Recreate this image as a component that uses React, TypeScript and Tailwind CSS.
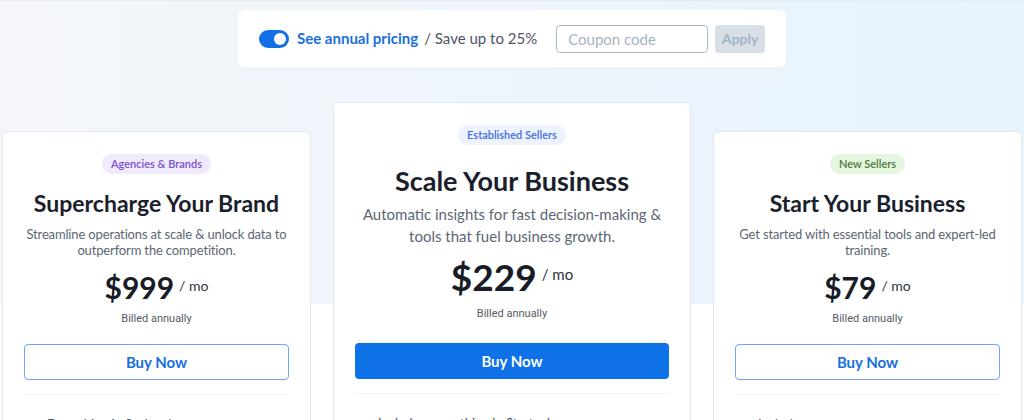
import React from "react";

type Plan = {
  badge: string;
  badgeCls: string;
  title: string;
  desc: string;
  price: string;
  featured?: boolean;
  feature: string;
};

const plans: Plan[] = [
  {
    badge: "Agencies & Brands",
    badgeCls: "bg-[#f0eafd] text-[#7b4fd0]",
    title: "Supercharge Your Brand",
    desc: "Streamline operations at scale & unlock data to outperform the competition.",
    price: "$999",
    feature: "Everything in Scale, plus:",
  },
  {
    badge: "Established Sellers",
    badgeCls: "bg-[#edf2fd] text-[#3d6fe3]",
    title: "Scale Your Business",
    desc: "Automatic insights for fast decision-making & tools that fuel business growth.",
    price: "$229",
    featured: true,
    feature: "Includes everything in Start, plus:",
  },
  {
    badge: "New Sellers",
    badgeCls: "bg-[#e4f6dd] text-[#4d7a3c]",
    title: "Start Your Business",
    desc: "Get started with essential tools and expert-led training.",
    price: "$79",
    feature: "Includes:",
  },
];

function Card({ p }: { p: Plan }) {
  const f = p.featured;
  return (
    <div
      className={
        "flex flex-col items-center rounded-md border border-[#e3e8ef] bg-white " +
        (f ? "w-[358px] pt-[22px] px-[21px] h-[360px]" : "w-[309px] mt-[29px] pt-[22px] px-[21px] h-[330px]")
      }
    >
      <span
        className={
          "rounded-full px-[9px] h-[20px] leading-[20px] text-[11px] font-semibold " + p.badgeCls
        }
      >
        {p.badge}
      </span>
      <h2
        className={
          "font-bold text-[#1a202c] text-center whitespace-nowrap " +
          (f ? "text-[27px] leading-[32px] mt-[20px]" : "text-[23px] leading-[28px] mt-[15px]")
        }
      >
        {p.title}
      </h2>
      <p
        className={
          "text-center text-[#5c6675] " +
          (f ? "text-[15px] leading-[22px] mt-[6px]" : "text-[13px] leading-[16px] mt-[9px] tracking-[-0.15px]")
        }
      >
        {p.desc}
      </p>
      <div className={"flex items-center gap-[5px] " + (f ? "mt-[8px] h-[44px]" : "mt-[9px] h-[40px]")}>
        <span className={"font-bold text-[#171c26] " + (f ? "text-[37px] leading-[44px]" : "text-[30px] leading-[40px]")}>
          {p.price}
        </span>
        <span className={"text-[#2d3340] " + (f ? "text-[15px] mb-[5px]" : "text-[14px] mb-[3px]")}>/ mo</span>
      </div>
      <div
        className={
          "text-[11px] leading-[16px] text-[#555b66] font-['Roboto',sans-serif] " + (f ? "mt-[7px]" : "mt-[4px]")
        }
      >
        Billed annually
      </div>
      <button
        className={
          "w-full h-[36px] rounded-[4px] text-[15px] font-bold " +
          (f
            ? "bg-[#0e71e6] text-white mt-[21px]"
            : "border border-[#6fa5f1] text-[#1670e3] bg-white mt-[17px]")
        }
      >
        Buy Now
      </button>
      <div className="w-full h-px bg-[#f1f3f6] mt-[14px]" />
      <div className="w-full text-left text-[13px] text-[#4a5261] mt-[20px] pl-[23px]">{p.feature}</div>
    </div>
  );
}

export default function App() {
  return (
    <div className="w-[1024px] h-[420px] overflow-hidden bg-white bg-[linear-gradient(to_right,#f4f6fa,#e7f3fd)] bg-no-repeat bg-[length:100%_303px] font-['Lato','Noto_Sans',sans-serif] border-t border-[#e6ebf1]">
      <div className="flex justify-center pt-[9px]">
        <div className="w-[548px] h-[57px] bg-white rounded-md flex items-center px-[21px]">
          <div className="w-[30px] h-[18px] rounded-full bg-[#1170e6] flex items-center justify-end pr-[3px] shrink-0">
            <div className="w-[12px] h-[12px] rounded-full bg-white" />
          </div>
          <span className="ml-[8px] text-[15px] font-bold text-[#1a6fe0] whitespace-nowrap">See annual pricing</span>
          <span className="ml-[6px] text-[15px] text-[#4b5563] whitespace-nowrap">/ Save up to 25%</span>
          <input
            className="ml-[19px] w-[152px] h-[28px] rounded-[4px] border border-[#a9b8c9] px-[11px] text-[15px] placeholder:text-[#a5b3c3] outline-none shrink-0"
            placeholder="Coupon code"
          />
          <button className="ml-[7px] w-[50px] h-[28px] rounded-[4px] bg-[#d8dfe7] text-[#9fb0c3] text-[14px] font-semibold shrink-0">
            Apply
          </button>
        </div>
      </div>
      <div className="flex items-start gap-[22px] px-[2px] mt-[35px]">
        {plans.map((p) => (
          <Card key={p.title} p={p} />
        ))}
      </div>
    </div>
  );
}
